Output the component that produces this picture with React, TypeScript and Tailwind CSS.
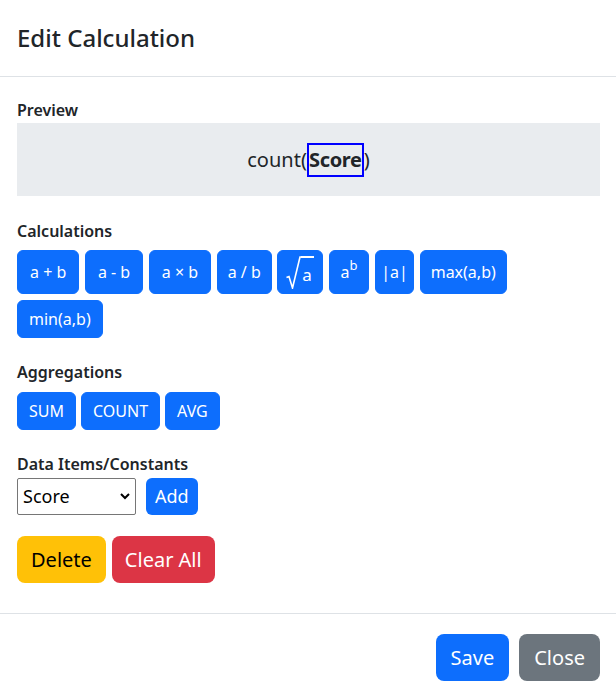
import React from "react";

const font = { fontFamily: '"Segoe UI", "Noto Sans", "Open Sans", sans-serif' };

const Btn = ({
  children,
  className = "px-3",
}: {
  children: React.ReactNode;
  className?: string;
}) => (
  <button
    className={`inline-flex items-center justify-center rounded-[6px] border border-[#0d6efd] bg-[#0d6efd] py-[6px] text-[16px] leading-6 text-white ${className}`}
  >
    {children}
  </button>
);

const Label = ({ children, className = "" }: { children: React.ReactNode; className?: string }) => (
  <div className={`text-[16px] font-semibold leading-6 text-[#212529] ${className}`}>{children}</div>
);

export default function App() {
  return (
    <div style={font} className="h-[696px] w-[616px] overflow-hidden bg-white text-[#212529]">
      {/* header */}
      <div className="flex h-[77px] items-center border-b border-[#dee2e6] pl-[17px] pr-4">
        <h3 className="text-[24px] font-medium leading-[1.2]">Edit Calculation</h3>
      </div>

      {/* body */}
      <div className="pl-[17px] pr-4 pt-[21px] pb-[30px]">
        <Label>Preview</Label>
        <div className="mt-[1px] flex h-[73px] items-center justify-center bg-[#e9ecef] text-[20px] leading-[1.5]">
          <span>count(</span>
          <span className="inline-block border-2 border-[#0000ff] font-bold tracking-[-0.3px]">Score</span>
          <span>)</span>
        </div>

        <Label className="mt-[23px]">Calculations</Label>
        <div className="mt-[7px] flex max-w-[560px] flex-wrap gap-x-[5.6px] gap-y-[6px]">
          <Btn>a + b</Btn>
          <Btn>a - b</Btn>
          <Btn>a × b</Btn>
          <Btn className="px-[10px]">a / b</Btn>
          <button className="inline-flex h-[44px] items-start rounded-[6px] border border-[#0d6efd] bg-[#0d6efd] pl-[8px] pr-[8px] pt-[5px] text-white">
            <svg width="15" height="33" viewBox="0 0 15 33" className="block">
              <path
                d="M0.5 21.5 L3 20.5 L6.5 32 L14 1 L15 1"
                fill="none"
                stroke="white"
                strokeWidth="1.6"
                strokeLinejoin="miter"
              />
            </svg>
            <span className="block border-t-2 border-white pl-[1px] pr-[2px] pt-[7px] text-[17px] leading-5">
              a
            </span>
          </button>
          <Btn className="px-[11px]">
            a<sup className="relative -top-[7px] text-[13px] leading-none">b</sup>
          </Btn>
          <Btn className="w-[39px] px-0">|a|</Btn>
          <Btn className="px-[10px]">max(a,b)</Btn>
          <Btn className="px-[11px]">min(a,b)</Btn>
        </div>

        <Label className="mt-[22px]">Aggregations</Label>
        <div className="mt-[8px] flex gap-[5px]">
          <Btn className="px-[11px]">SUM</Btn>
          <Btn className="px-[11px]">COUNT</Btn>
          <Btn className="px-[11px]">AVG</Btn>
        </div>

        <Label className="mt-[22px]">Data Items/Constants</Label>
        <div className="mt-[2px] flex items-center gap-[10px]">
          <div className="relative">
            <select className="h-[37px] w-[119px] appearance-none rounded-[2px] border border-[#767676] bg-white pl-[5px] text-[18px] text-black">
              <option>Score</option>
            </select>
            <svg
              className="pointer-events-none absolute right-[6px] top-[15px]"
              width="10"
              height="7"
              viewBox="0 0 10 7"
            >
              <path d="M1 1 L5 5 L9 1" fill="none" stroke="black" strokeWidth="2" />
            </svg>
          </div>
          <button className="h-[37px] rounded-[6px] bg-[#0d6efd] px-[9px] text-[18px] text-white">
            Add
          </button>
        </div>

        <div className="mt-[21px] flex gap-[6px]">
          <button className="h-[47px] rounded-[8px] bg-[#ffc107] px-[14px] text-[20px] text-black">
            Delete
          </button>
          <button className="h-[47px] rounded-[8px] bg-[#dc3545] px-[13px] text-[20px] text-white">
            Clear All
          </button>
        </div>
      </div>

      {/* footer */}
      <div className="flex justify-end gap-[10px] border-t border-[#dee2e6] pl-4 pr-4 pt-5">
        <button className="h-[47px] rounded-[8px] bg-[#0d6efd] px-[15px] text-[20px] text-white">Save</button>
        <button className="h-[47px] rounded-[8px] bg-[#6c757d] px-[15px] text-[20px] text-white">Close</button>
      </div>
    </div>
  );
}
